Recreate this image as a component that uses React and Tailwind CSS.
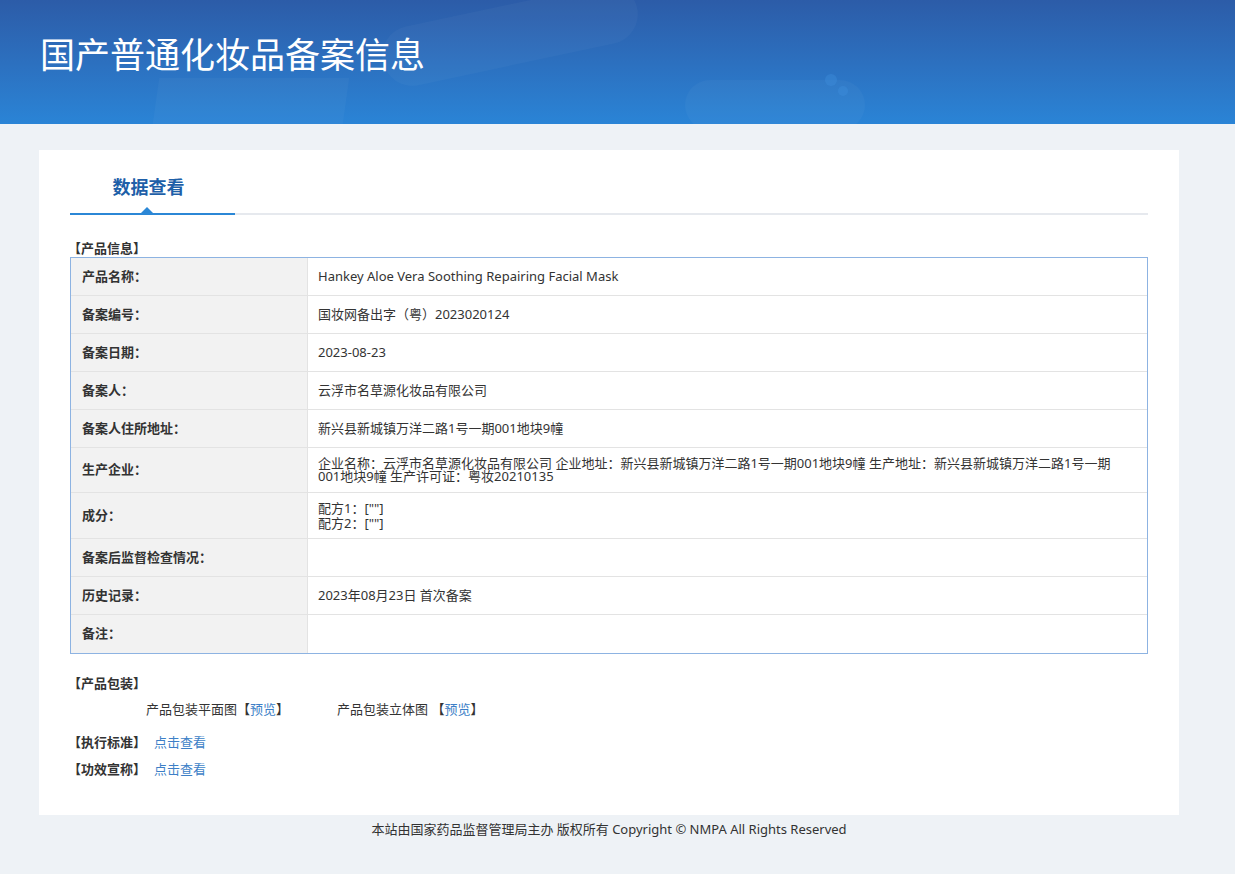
const ROWS = [
  { label: '产品名称：', value: 'Hankey Aloe Vera Soothing Repairing Facial Mask', h: 'h-[38px]' },
  { label: '备案编号：', value: '国妆网备出字（粤）2023020124', h: 'h-[38px]' },
  { label: '备案日期：', value: '2023-08-23', h: 'h-[38px]' },
  { label: '备案人：', value: '云浮市名草源化妆品有限公司', h: 'h-[38px]' },
  { label: '备案人住所地址：', value: '新兴县新城镇万洋二路1号一期001地块9幢', h: 'h-[38px]' },
  {
    label: '生产企业：',
    value: '企业名称：云浮市名草源化妆品有限公司 企业地址：新兴县新城镇万洋二路1号一期001地块9幢 生产地址：新兴县新城镇万洋二路1号一期001地块9幢 生产许可证：粤妆20210135',
    h: 'h-[45px]',
    tight: true,
  },
  { label: '成分：', lines: ['配方1：[""]', '配方2：[""]'], h: 'h-[46px]' },
  { label: '备案后监督检查情况：', value: '', h: 'h-[38px]' },
  { label: '历史记录：', value: '2023年08月23日 首次备案', h: 'h-[38px]' },
  { label: '备注：', value: '', h: 'h-[38px]' },
];

function Row({ row, last }) {
  return (
    <div className={`flex ${row.h} ${last ? '' : 'border-b border-[#e3e3e3]'}`}>
      <div className="w-[237px] shrink-0 bg-[#f2f2f2] border-r border-[#e3e3e3] flex items-center pl-[11px] font-bold text-[13px] text-[#333]">
        {row.label}
      </div>
      <div className="flex-1 flex flex-col justify-center px-[10px] text-[13px] text-[#333]">
        {row.lines ? (
          row.lines.map((l) => (
            <div key={l} className="leading-[15px]">{l}</div>
          ))
        ) : (
          <div className={row.tight ? 'leading-[13px] pr-[20px]' : ''}>{row.value}</div>
        )}
      </div>
    </div>
  );
}

export default function App() {
  return (
    <div
      className="min-h-[874px] bg-[#eef2f6] text-[#333]"
      style={{ fontFamily: '"Noto Sans", "Noto Sans CJK SC", sans-serif' }}
    >
      <header className="relative h-[124px] overflow-hidden bg-gradient-to-b from-[#2c5ca8] to-[#2a84d6]">
        <div className="absolute left-[155px] top-[78px] w-[190px] h-[60px] bg-white/[0.03] skew-x-[-8deg]"></div>
        <div className="absolute left-[380px] top-[5px] w-[260px] h-[60px] rounded-full bg-white/[0.03] rotate-[-12deg]"></div>
        <div className="absolute left-[685px] top-[80px] w-[180px] h-[50px] rounded-full bg-white/[0.03]"></div>
        <div className="absolute left-[825px] top-[74px] w-[12px] h-[12px] rounded-full bg-[#3f8fdc]/40"></div>
        <div className="absolute left-[838px] top-[86px] w-[10px] h-[10px] rounded-full bg-[#3f8fdc]/40"></div>
        <h1 className="relative pl-[40px] pt-[33px] text-[35px] leading-[44px] text-white">
          国产普通化妆品备案信息
        </h1>
      </header>

      <main className="ml-[39px] w-[1140px] mt-[26px] bg-white px-[31px] pt-[25px] pb-[37px]">
        <div className="relative flex h-[40px] border-b-2 border-[#e6e9ee]">
          <div className="relative w-[165px] -mb-[2px] border-b-2 border-[#2b87d6] text-center">
            <span className="text-[18px] font-bold text-[#1e5fa8] leading-[25px] -ml-[8px]">数据查看</span>
            <div className="absolute left-[71px] bottom-0 w-0 h-0 border-x-[6px] border-x-transparent border-b-[6px] border-b-[#2b87d6]"></div>
          </div>
        </div>

        <div className="mt-[24px] text-[13px] font-bold leading-[18px] -ml-[2px]">【产品信息】</div>
        <div className="border border-[#8db3e2]">
          {ROWS.map((r, i) => (
            <Row key={r.label} row={r} last={i === ROWS.length - 1} />
          ))}
        </div>

        <div className="mt-[20px] text-[13px] font-bold leading-[18px] -ml-[2px]">【产品包装】</div>
        <div className="mt-[8px] flex pl-[76px] text-[13px] leading-[18px]">
          <span>产品包装平面图【<span className="text-[#3d7fc7]">预览</span>】</span>
          <span className="ml-[48px]">产品包装立体图 【<span className="text-[#3d7fc7]">预览</span>】</span>
        </div>
        <div className="mt-[15px] flex text-[13px] leading-[18px] -ml-[2px]">
          <span className="font-bold">【执行标准】</span>
          <span className="ml-[8px] text-[#3d7fc7]">点击查看</span>
        </div>
        <div className="mt-[9px] flex text-[13px] leading-[18px] -ml-[2px]">
          <span className="font-bold">【功效宣称】</span>
          <span className="ml-[8px] text-[#3d7fc7]">点击查看</span>
        </div>
      </main>

      <footer className="w-[1218px] pt-[5px] text-center text-[13px] leading-[18px] text-[#333]">
        本站由国家药品监督管理局主办 版权所有 Copyright © NMPA All Rights Reserved
      </footer>
    </div>
  );
}
